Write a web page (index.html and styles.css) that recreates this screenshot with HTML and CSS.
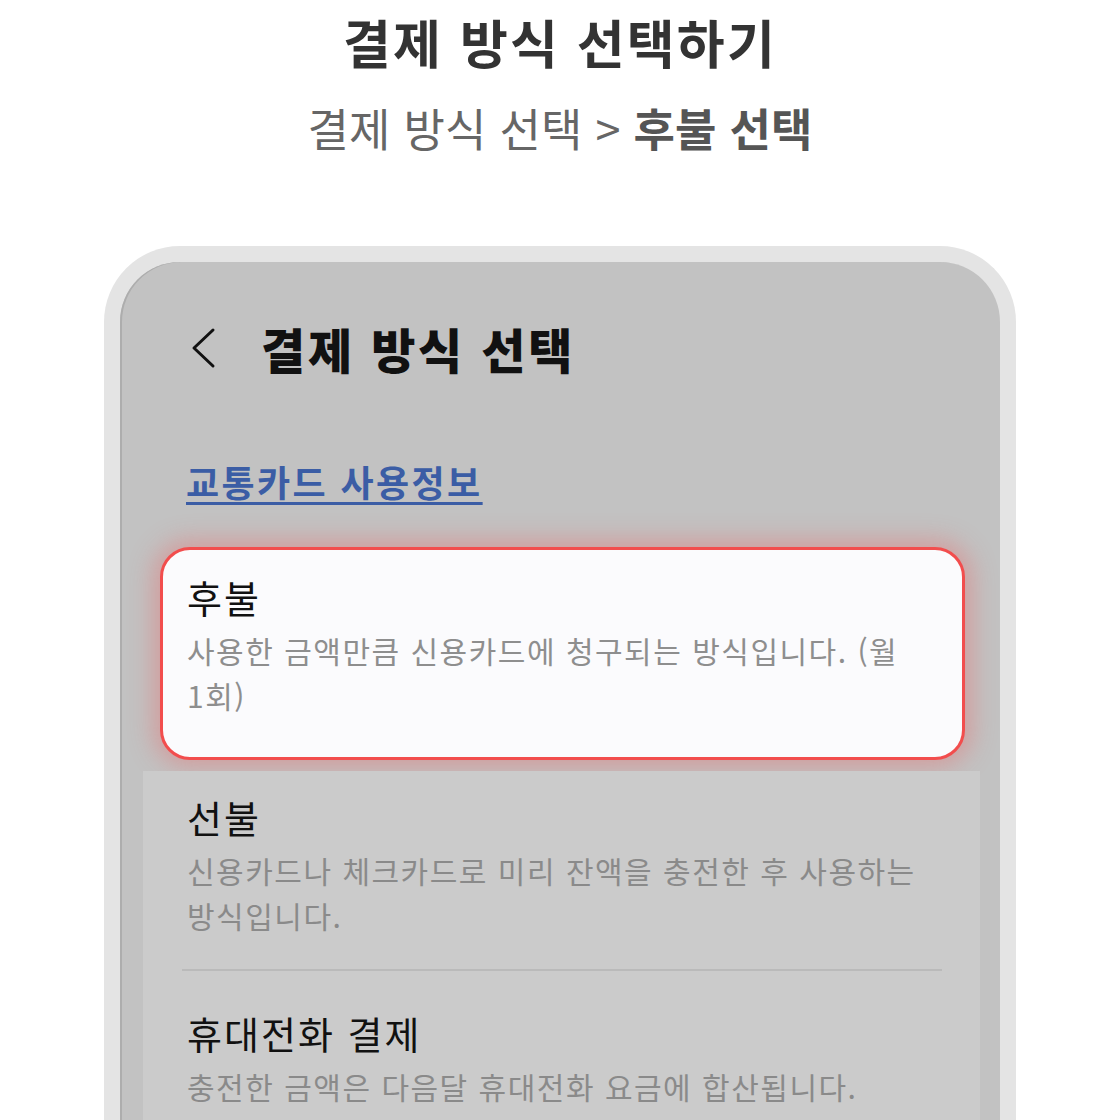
FILE: index.html
```html
<!DOCTYPE html>
<html lang="ko">
<head>
    <meta charset="UTF-8">
    <meta name="viewport" content="width=device-width, initial-scale=1.0">
    <title>결제 방식 선택하기</title>
    <link rel="stylesheet" href="styles.css">
</head>
<body>
    <div class="page-head">
        <h1>결제 방식 선택하기</h1>
        <p class="crumb">결제 방식 선택 &gt; <strong>후불 선택</strong></p>
    </div>

    <div class="phone">
        <div class="screen">
            <div class="app-bar">
                <svg class="back" width="28" height="42" viewBox="0 0 28 42">
                    <polyline points="24,3 5,21 24,39" fill="none" stroke="#111" stroke-width="3" stroke-linecap="round" stroke-linejoin="round"/>
                </svg>
                <h2>결제 방식 선택</h2>
            </div>

            <a class="info-link" href="#">교통카드 사용정보</a>

            <div class="option selected">
                <div class="option-title">후불</div>
                <div class="option-desc">사용한 금액만큼 신용카드에 청구되는 방식입니다. (월 1회)</div>
            </div>

            <div class="option-list">
                <div class="option">
                    <div class="option-title">선불</div>
                    <div class="option-desc">신용카드나 체크카드로 미리 잔액을 충전한 후 사용하는 방식입니다.</div>
                </div>
                <div class="divider"></div>
                <div class="option">
                    <div class="option-title">휴대전화 결제</div>
                    <div class="option-desc">충전한 금액은 다음달 휴대전화 요금에 합산됩니다.</div>
                </div>
            </div>
        </div>
    </div>
</body>
</html>
```

FILE: styles.css
```css
html, body { margin: 0; height: 1120px; overflow: hidden; }
body { background: #fff; font-family: "Noto Sans CJK KR", "Noto Sans", sans-serif; color: #111; word-break: keep-all; }

.page-head { text-align: center; padding-top: 11px; }
.page-head h1 { margin: 0; font-size: 52px; line-height: 62px; font-weight: 700; color: #333; letter-spacing: 2.2px; }
.crumb { margin: 28px 0 0; font-size: 45px; line-height: 53px; color: #666; letter-spacing: 0.2px; }
.crumb strong { color: #555; font-weight: 700; }

.phone { margin: 92px 0 0 104px; width: 880px; min-height: 900px; border: 16px solid #e4e4e4; border-bottom: none; border-radius: 76px 76px 0 0; background: #e4e4e4; }
.screen { min-height: 900px; background: #c2c2c2; border-radius: 60px 60px 0 0; box-shadow: inset 2px 0 0 #adadad; padding-top: 62px; }

.app-bar { display: flex; align-items: center; gap: 44px; padding-left: 69px; height: 48px; }
.app-bar h2 { margin: 0; font-size: 48px; line-height: 48px; font-weight: 900; color: #111; letter-spacing: 2.8px; }

.info-link { display: inline-block; margin: 87px 0 0 66px; font-size: 36px; line-height: 44px; font-weight: 700; color: #3b5da5; letter-spacing: 2.4px; text-decoration: underline; text-decoration-thickness: 3px; text-underline-offset: 5px; }

.option-title { font-size: 38px; line-height: 49px; color: #111; letter-spacing: 2px; }
.option-desc { margin-top: 7px; font-size: 30px; line-height: 45px; color: #8a8a8a; letter-spacing: 1.5px; }

.option.selected { margin: 44px 35px 0 40px; padding: 22px 28px 39px 24px; background: #fbfbfd; border: 3px solid #f24d4d; border-radius: 30px; box-shadow: 0 0 24px 7px rgba(240, 90, 90, 0.36); }
.option.selected .option-desc { color: #8e8e8e; }

.option-list { margin: 11px 20px 0 23px; padding: 21px 38px 0 44px; background: #cbcbcb; min-height: 400px; }
.divider { height: 2px; background: #bababa; margin: 31px 0 37px -5px; }
```
